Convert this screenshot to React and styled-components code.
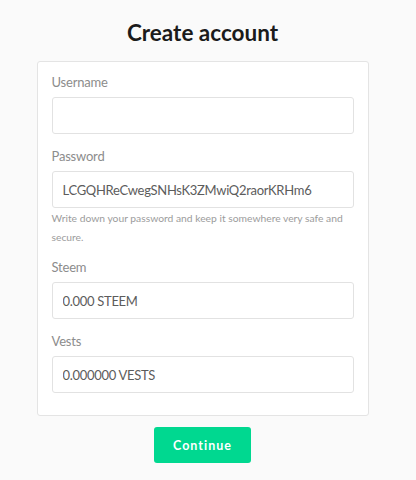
import React from "react"
import styled, { createGlobalStyle } from "styled-components"

const GlobalStyle = createGlobalStyle`
    body {
        margin: 0;
        background: #fafafa;
        font-family: Lato, "Open Sans", sans-serif;
    }
`

const Page = styled.div`
    width: 405px;
    height: 480px;
    display: flex;
    flex-direction: column;
    align-items: center;
    box-sizing: border-box;
    padding-top: 18px;
`

const Title = styled.h1`
    margin: 0 0 14px;
    font-size: 22.5px;
    line-height: 29px;
    font-weight: 700;
    color: #1b1b1b;
`

const Card = styled.div`
    width: 332px;
    box-sizing: border-box;
    background: #fff;
    border: 1px solid #e4e4e4;
    border-radius: 3px;
    padding: 10px 14px 10px;
    margin-bottom: 11px;
`

const Field = styled.div`
    margin-bottom: ${(p) => (p.tight ? "1px" : "12px")};
`

const Label = styled.label`
    display: block;
    font-size: 13px;
    letter-spacing: -0.2px;
    line-height: 20px;
    color: #8c8c8c;
    margin-bottom: 5px;
`

const Input = styled.input`
    display: block;
    width: 100%;
    height: 37px;
    box-sizing: border-box;
    border: 1px solid #e2e2e2;
    border-radius: 3px;
    padding: 0 10px;
    font-family: Lato, "Open Sans", sans-serif;
    font-size: 13px;
    letter-spacing: -0.3px;
    color: #5c5c5c;
    background: #fff;
    outline: none;
`

const Help = styled.p`
    margin: 0 0 10px;
    font-size: 10.3px;
    line-height: 19px;
    color: #9c9c9c;
`

const Button = styled.button`
    width: 97px;
    height: 36px;
    border: none;
    border-radius: 3px;
    background: #00d890;
    color: #fff;
    font-family: Lato, "Open Sans", sans-serif;
    font-size: 12.5px;
    font-weight: 700;
    letter-spacing: 1px;
    cursor: pointer;
`

const App = () => {
    return (
        <Page>
            <GlobalStyle />
            <Title>Create account</Title>
            <Card>
                <Field>
                    <Label>Username</Label>
                    <Input type="text" />
                </Field>
                <Field tight>
                    <Label>Password</Label>
                    <Input type="text" defaultValue="LCGQHReCwegSNHsK3ZMwiQ2raorKRHm6" />
                </Field>
                <Help>Write down your password and keep it somewhere very safe and secure.</Help>
                <Field>
                    <Label>Steem</Label>
                    <Input type="text" defaultValue="0.000 STEEM" />
                </Field>
                <Field>
                    <Label>Vests</Label>
                    <Input type="text" defaultValue="0.000000 VESTS" />
                </Field>
            </Card>
            <Button>Continue</Button>
        </Page>
    )
}

export default App
